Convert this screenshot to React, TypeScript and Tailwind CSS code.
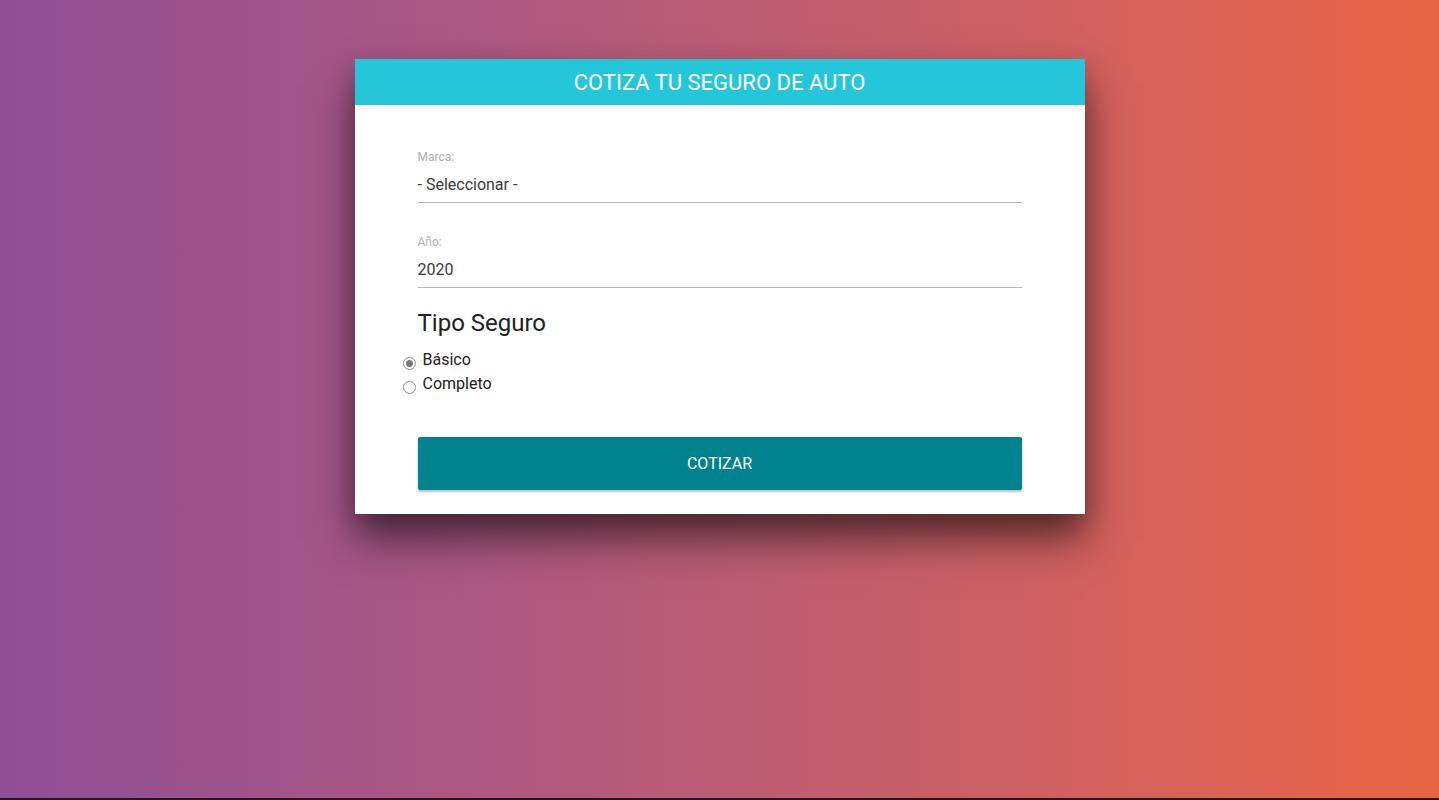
import React from "react";

function Radio({ checked }: { checked?: boolean }) {
  return (
    <span className="mt-[9px] flex h-[13px] w-[13px] shrink-0 items-center justify-center rounded-full border border-[#8f8f8f] bg-white">
      {checked ? <span className="h-[7px] w-[7px] rounded-full bg-[#7a7a7a]" /> : null}
    </span>
  );
}

export default function App() {
  return (
    <div className="w-full" style={{ fontFamily: "Roboto, 'Liberation Sans', sans-serif" }}>
      <div className="flex h-[798px] w-full justify-center bg-gradient-to-r from-[#904e95] to-[#e96443]">
        <div className="mt-[59px] h-fit w-[730px] bg-white shadow-[0_26px_40px_rgba(0,0,0,0.5),0_10px_24px_rgba(0,0,0,0.2)]">
          <div className="flex h-[46px] items-center justify-center bg-[#26c6da] text-[22px] text-white">
            COTIZA TU SEGURO DE AUTO
          </div>
          <div className="px-[63px] pb-[24px] pt-[45px]">
            <div className="flex flex-col">
              <label className="h-[14px] text-[12px] leading-[14px] text-[#b0b0b0]">Marca:</label>
              <div className="mt-[6px] flex h-[33px] items-center border-b border-[#b8b8b8] pb-[3px] text-[16px] text-[#3a3a3a]">
                - Seleccionar -
              </div>
            </div>
            <div className="mt-[32px] flex flex-col">
              <label className="h-[14px] text-[12px] leading-[14px] text-[#b0b0b0]">Año:</label>
              <div className="mt-[6px] flex h-[33px] items-center border-b border-[#b8b8b8] pb-[3px] text-[16px] text-[#3a3a3a]">
                2020
              </div>
            </div>
            <h2 className="mt-[20px] text-[24px] leading-[30px] text-[#212121]">Tipo Seguro</h2>
            <div className="-ml-[15px] mt-[10px] flex flex-col">
              <div className="flex items-start gap-[7px] text-[16px] leading-[24px] text-[#212121]">
                <Radio checked />
                <span>Básico</span>
              </div>
              <div className="flex items-start gap-[7px] text-[16px] leading-[24px] text-[#212121]">
                <Radio />
                <span>Completo</span>
              </div>
            </div>
            <button className="mt-[41px] flex h-[53px] w-full items-center justify-center rounded-[2px] bg-[#00838f] text-[16px] text-white shadow-[0_2px_3px_rgba(0,0,0,0.25)]">
              COTIZAR
            </button>
          </div>
        </div>
      </div>
      <div className="h-[2px] w-full bg-[#1d1a22]" />
    </div>
  );
}
